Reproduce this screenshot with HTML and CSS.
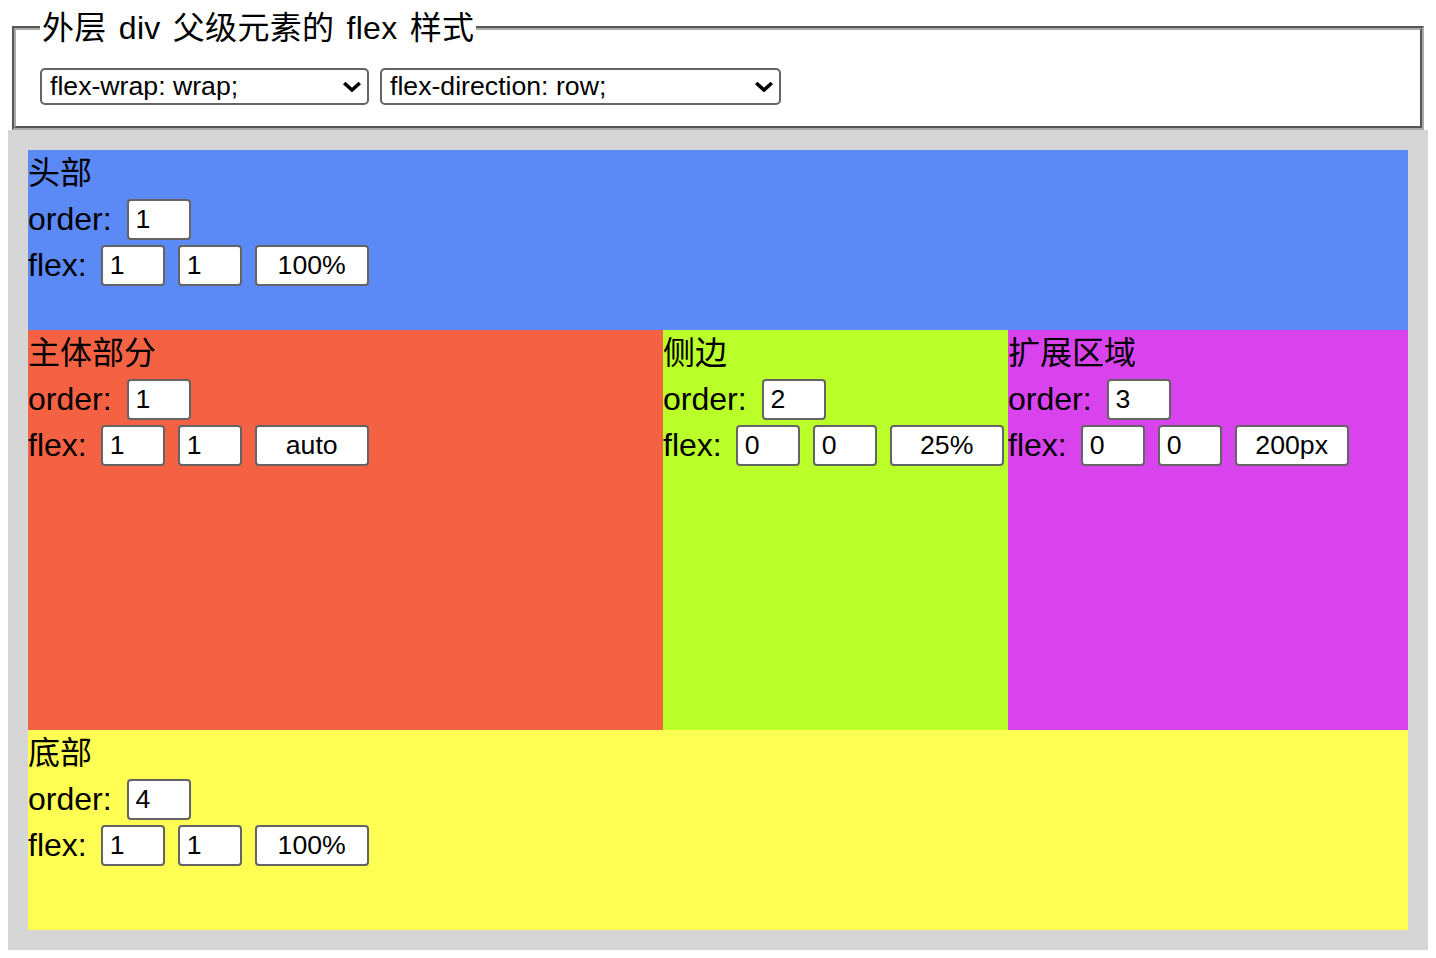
FILE: index.html
```html
<!DOCTYPE html>
<html lang="zh-CN">
<head>
<meta charset="utf-8">
<title>flex 布局</title>
<link rel="stylesheet" href="styles.css">
</head>
<body>
<fieldset class="panel">
  <legend class="panel-title">外层 div 父级元素的 flex 样式</legend>
  <div class="controls">
    <label class="select-wrap wrap-select">
      <select class="picker">
        <option>flex-wrap: wrap;</option>
        <option>flex-wrap: nowrap;</option>
        <option>flex-wrap: wrap-reverse;</option>
      </select>
      <svg class="chev" width="20" height="11" viewBox="0 0 20 11"><path d="M2.2 2 L10 9 L17.8 2" fill="none" stroke="#000" stroke-width="3.6"/></svg>
    </label>
    <label class="select-wrap dir-select">
      <select class="picker">
        <option>flex-direction: row;</option>
        <option>flex-direction: row-reverse;</option>
        <option>flex-direction: column;</option>
        <option>flex-direction: column-reverse;</option>
      </select>
      <svg class="chev" width="20" height="11" viewBox="0 0 20 11"><path d="M2.2 2 L10 9 L17.8 2" fill="none" stroke="#000" stroke-width="3.6"/></svg>
    </label>
  </div>
</fieldset>

<div class="board">
  <div class="box box-header">
    <div class="box-title">头部</div>
    <div class="field"><span class="label label-order">order:</span><input class="num" value="1"></div>
    <div class="field"><span class="label label-flex">flex:</span><input class="num" value="1"><input class="num" value="1"><input class="basis" value="100%"></div>
  </div>
  <div class="box box-main">
    <div class="box-title">主体部分</div>
    <div class="field"><span class="label label-order">order:</span><input class="num" value="1"></div>
    <div class="field"><span class="label label-flex">flex:</span><input class="num" value="1"><input class="num" value="1"><input class="basis" value="auto"></div>
  </div>
  <div class="box box-side">
    <div class="box-title">侧边</div>
    <div class="field"><span class="label label-order">order:</span><input class="num" value="2"></div>
    <div class="field"><span class="label label-flex">flex:</span><input class="num" value="0"><input class="num" value="0"><input class="basis" value="25%"></div>
  </div>
  <div class="box box-ext">
    <div class="box-title">扩展区域</div>
    <div class="field"><span class="label label-order">order:</span><input class="num" value="3"></div>
    <div class="field"><span class="label label-flex">flex:</span><input class="num" value="0"><input class="num" value="0"><input class="basis" value="200px"></div>
  </div>
  <div class="box box-footer">
    <div class="box-title">底部</div>
    <div class="field"><span class="label label-order">order:</span><input class="num" value="4"></div>
    <div class="field"><span class="label label-flex">flex:</span><input class="num" value="1"><input class="num" value="1"><input class="basis" value="100%"></div>
  </div>
</div>
</body>
</html>
```

FILE: styles.css
```css
html, body {
  background: #ffffff;
}

body {
  margin: 8px;
  font-family: "Liberation Sans", Arial, "Noto Sans CJK SC", sans-serif;
  font-size: 32px;
  color: #000;
}

.panel {
  margin: 0 4px;
  border: 4px groove #aaaaaa;
  padding: 20px 24px 21px;
  min-inline-size: 0;
}

.panel-title {
  padding: 0 2px;
  line-height: 40px;
  font-size: 32px;
  word-spacing: 3px;
  letter-spacing: 0.3px;
}

.controls {
  display: flex;
  gap: 11px;
}

.select-wrap {
  position: relative;
  display: block;
  height: 37px;
}

.wrap-select {
  width: 329px;
}

.dir-select {
  width: 401px;
}

.picker {
  appearance: none;
  -webkit-appearance: none;
  display: block;
  box-sizing: border-box;
  width: 100%;
  height: 37px;
  margin: 0;
  padding: 0 34px 0 8px;
  border: 2px solid #646464;
  border-radius: 5px;
  background: #ffffff;
  font-family: "Liberation Sans", Arial, sans-serif;
  font-size: 26.67px;
  color: #000;
  line-height: 33px;
}

.chev {
  position: absolute;
  right: 7px;
  top: 13px;
  pointer-events: none;
}

.board {
  display: flex;
  flex-wrap: wrap;
  background: #d6d6d6;
  padding: 20px;
}

.box {
  box-sizing: border-box;
  min-width: 0;
}

.box-header {
  flex: 1 1 100%;
  height: 180px;
  background: #5b89f5;
}

.box-main {
  flex: 1 1 auto;
  height: 400px;
  background: #f46243;
}

.box-side {
  flex: 0 0 25%;
  height: 400px;
  background: #baff29;
}

.box-ext {
  flex: 0 0 400px;
  height: 400px;
  background: #d843ee;
}

.box-footer {
  flex: 1 1 100%;
  height: 200px;
  background: #fffe52;
}

.box-title {
  height: 46px;
  line-height: 46px;
  white-space: nowrap;
}

.field {
  display: flex;
  align-items: center;
  height: 46px;
  gap: 13px;
  white-space: nowrap;
}

.label {
  line-height: 46px;
}

.label-order {
  margin-right: 2px;
}

.label-flex {
  margin-right: 1px;
}

.num,
.basis {
  box-sizing: border-box;
  height: 41px;
  margin: 0;
  padding: 0 7px;
  border: 2px solid #646464;
  border-radius: 4px;
  background: #ffffff;
  font-family: "Liberation Sans", Arial, sans-serif;
  font-size: 26.67px;
  color: #000;
  outline: none;
}

.num {
  width: 64px;
}

.basis {
  width: 114px;
  text-align: center;
}
```
